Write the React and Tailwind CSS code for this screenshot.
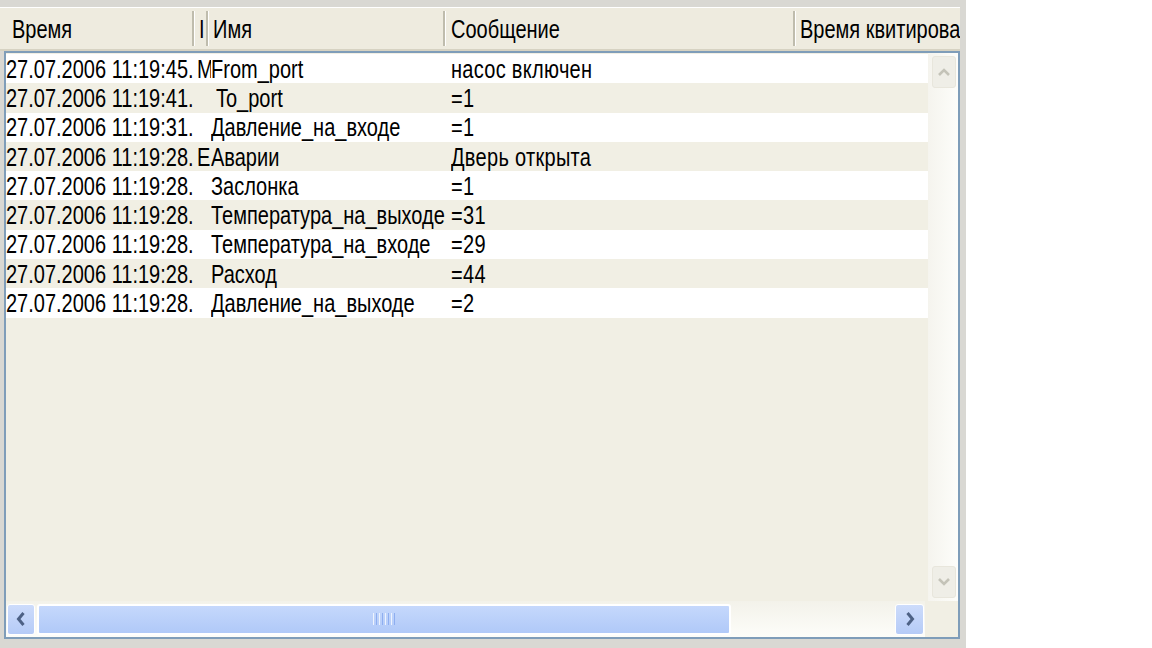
import React from 'react';

const rows = [
  ['27.07.2006 11:19:45.', 'M', 'From_port', 'насос включен'],
  ['27.07.2006 11:19:41.', '', 'To_port', '=1', true],
  ['27.07.2006 11:19:31.', '', 'Давление_на_входе', '=1'],
  ['27.07.2006 11:19:28.', 'E', 'Аварии', 'Дверь открыта'],
  ['27.07.2006 11:19:28.', '', 'Заслонка', '=1'],
  ['27.07.2006 11:19:28.', '', 'Температура_на_выходе', '=31'],
  ['27.07.2006 11:19:28.', '', 'Температура_на_входе', '=29'],
  ['27.07.2006 11:19:28.', '', 'Расход', '=44'],
  ['27.07.2006 11:19:28.', '', 'Давление_на_выходе', '=2'],
];

const font = { fontFamily: '"Liberation Sans", Arial, sans-serif' };

function T({ children, className = '' }) {
  return <span className={`inline-block scale-y-125 whitespace-nowrap ${className}`}>{children}</span>;
}

function HeaderCell({ w, label, pl = 'pl-[6px]', last }) {
  return (
    <div className={`flex h-full shrink-0 items-center overflow-hidden ${w} ${last ? 'flex-1' : ''}`}>
      <div className={`flex h-full min-w-0 flex-1 items-center overflow-hidden ${pl}`}>
        <T>{label}</T>
      </div>
      {!last && (
        <div className="flex h-full shrink-0 py-[3px]">
          <div className="w-[2px] bg-[#bfbcad]" />
          <div className="w-px bg-white" />
        </div>
      )}
    </div>
  );
}

function Cell({ w, children, className = '' }) {
  return (
    <div className={`flex h-full shrink-0 items-center overflow-hidden ${w} ${className}`}>
      <T>{children}</T>
    </div>
  );
}

export default function App() {
  return (
    <div className="flex h-[648px] w-[1152px] bg-white text-[20px] leading-none text-black" style={font}>
      <div className="flex h-full w-[966px] flex-col bg-[#d9d8d3] pt-[7px] pr-[6px] pb-[9px]">
        {/* column header */}
        <div className="flex h-[44px] shrink-0 border-t border-t-white border-b-2 border-b-[#d6d2c2] bg-[#eeebdf]">
          <HeaderCell w="w-[195px]" label="Время" pl="pl-[12px]" />
          <HeaderCell w="w-[14px]" label="I" pl="pl-[4px]" />
          <HeaderCell w="w-[237px]" label="Имя" pl="pl-[4px]" />
          <HeaderCell w="w-[350px]" label="Сообщение" pl="pl-[5px]" />
          <HeaderCell w="" label="Время квитирования" pl="pl-[4px]" last />
        </div>

        {/* list body */}
        <div className="ml-[4px] flex min-h-0 flex-1 flex-col border-2 border-[#7f9db9] bg-[#f1efe4]">
          <div className="flex min-h-0 flex-1">
            <div className="flex min-w-0 flex-1 flex-col pt-px">
              {rows.map((r, i) => (
                <div
                  key={i}
                  className={`flex h-[29.3px] shrink-0 items-center ${i % 2 === 0 ? 'bg-white' : 'bg-[#f1efe4]'}`}
                >
                  <Cell w="w-[191px]">{r[0]}</Cell>
                  <Cell w="w-[14px]">{r[1]}</Cell>
                  <Cell w="w-[240px]" className={r[4] ? 'pl-[5px]' : ''}>
                    {r[2]}
                  </Cell>
                  <Cell w="w-[349px]" className="tracking-[0.3px]">
                    {r[3]}
                  </Cell>
                  <div className="flex-1" />
                </div>
              ))}
            </div>

            {/* vertical scrollbar */}
            <div className="flex w-[30px] shrink-0 flex-col items-center bg-gradient-to-r from-[#f5f4ee] to-[#fdfdfa] py-[3px] pl-[2px]">
              <div className="flex h-[32px] w-[24px] items-center justify-center rounded-[3px] border border-[#e8e6dc] bg-[#efeee7]">
                <svg width="14" height="10" viewBox="0 0 14 10">
                  <path d="M2 8 L7 3 L12 8" fill="none" stroke="#c4c3b8" strokeWidth="2.6" />
                </svg>
              </div>
              <div className="flex-1" />
              <div className="flex h-[32px] w-[24px] items-center justify-center rounded-[3px] border border-[#e8e6dc] bg-[#efeee7]">
                <svg width="14" height="10" viewBox="0 0 14 10">
                  <path d="M2 2 L7 7 L12 2" fill="none" stroke="#c4c3b8" strokeWidth="2.6" />
                </svg>
              </div>
            </div>
          </div>

          {/* horizontal scrollbar */}
          <div className="flex h-[36px] shrink-0">
            <div className="flex flex-1 items-center bg-gradient-to-b from-[#f3f2ea] to-[#fdfdf9] px-px">
              <div className="flex h-[31px] w-[28px] shrink-0 items-center justify-center rounded-[3px] border border-white bg-gradient-to-b from-[#cddcfb] to-[#b5cbf7]">
                <svg width="10" height="16" viewBox="0 0 10 16">
                  <path d="M7.5 2 L2.5 8 L7.5 14" fill="none" stroke="#4d6185" strokeWidth="3" />
                </svg>
              </div>
              <div className="ml-[2px] flex h-[31px] w-[694px] shrink-0 items-center justify-center rounded-[3px] border-2 border-white bg-gradient-to-b from-[#c5d8fc] to-[#b0c9f8]">
                <div className="flex gap-[2px]">
                  <div className="h-[12px] w-px bg-[#eef3fd]" />
                  <div className="h-[12px] w-px bg-[#8eaef0]" />
                  <div className="h-[12px] w-px bg-[#eef3fd]" />
                  <div className="h-[12px] w-px bg-[#8eaef0]" />
                  <div className="h-[12px] w-px bg-[#eef3fd]" />
                  <div className="h-[12px] w-px bg-[#8eaef0]" />
                  <div className="h-[12px] w-px bg-[#eef3fd]" />
                  <div className="h-[12px] w-px bg-[#8eaef0]" />
                </div>
              </div>
              <div className="flex-1" />
              <div className="flex h-[31px] w-[29px] shrink-0 items-center justify-center rounded-[3px] border border-white bg-gradient-to-b from-[#cddcfb] to-[#b5cbf7]">
                <svg width="10" height="16" viewBox="0 0 10 16">
                  <path d="M2.5 2 L7.5 8 L2.5 14" fill="none" stroke="#4d6185" strokeWidth="3" />
                </svg>
              </div>
            </div>
            <div className="w-[33px] shrink-0 bg-[#f1efe4]" />
          </div>
        </div>
      </div>
    </div>
  );
}
